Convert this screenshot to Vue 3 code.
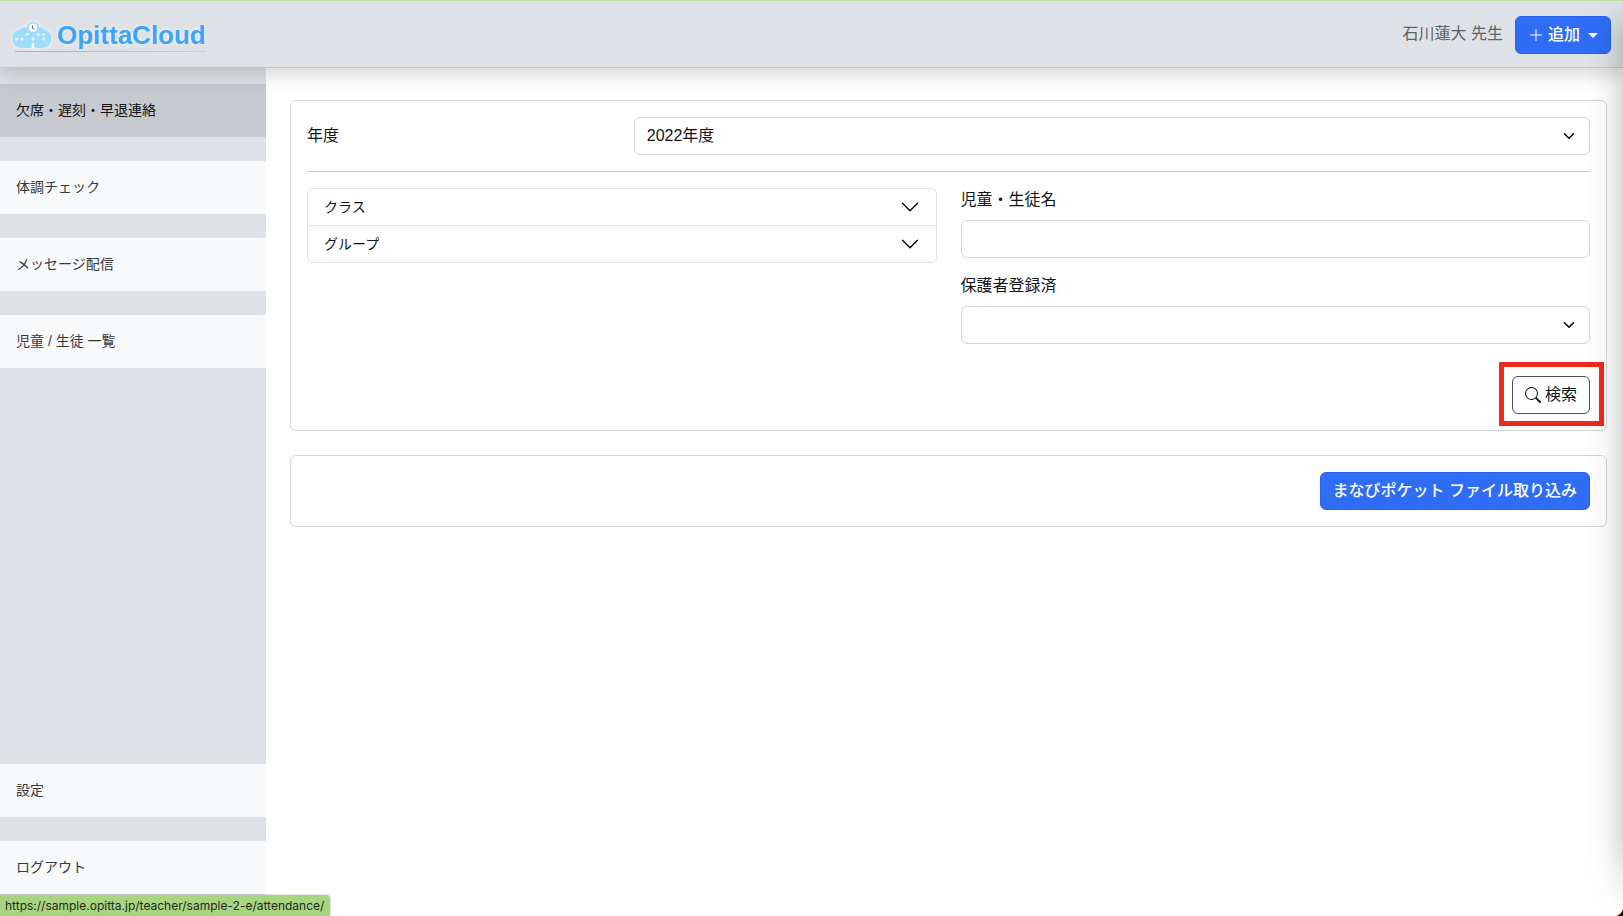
<script setup>
import { ref } from 'vue'

const year = ref('2022')
const studentName = ref('')
const registered = ref('')

const mainLinks = [
  { label: '欠席・遅刻・早退連絡', href: '#attendance', active: true },
  { label: '体調チェック', href: '#health' },
  { label: 'メッセージ配信', href: '#messages' },
  { label: '児童 / 生徒 一覧', href: '#students' },
]
const footLinks = [
  { label: '設定', href: '#settings' },
  { label: 'ログアウト', href: '#logout' },
]
const filters = ['クラス', 'グループ']
</script>

<template>
  <div class="page">
    <header class="topbar">
      <a class="brand" href="#home">
        <svg class="cloud" viewBox="0 0 40 28" width="40" height="28" aria-hidden="true">
          <g fill="#9edcfd">
            <circle cx="9.500" cy="17.500" r="9.500" />
            <circle cx="14" cy="12" r="6" />
            <circle cx="21" cy="7.500" r="6.500" />
            <circle cx="27" cy="12" r="6" />
            <circle cx="30" cy="17.500" r="9.500" />
            <rect x="9" y="10" width="21" height="17" />
          </g>
          <circle cx="21" cy="6.800" r="4.200" fill="#fff" />
          <path d="M20.500 4.500v2.800l2 .7" fill="none" stroke="#666" stroke-width="1" />
          <g fill="#fff">
            <rect x="14.200" y="12.200" width="2.400" height="2.400" />
            <rect x="25" y="12.200" width="2.400" height="2.400" />
            <rect x="30.500" y="12.200" width="2.400" height="2.400" />
            <rect x="3.200" y="17" width="2.400" height="2.400" />
            <rect x="8.700" y="17" width="2.400" height="2.400" />
            <rect x="19.800" y="17" width="2.400" height="2.400" />
            <rect x="30.500" y="17" width="2.400" height="2.400" />
            <rect x="19.700" y="22" width="2.600" height="5" />
          </g>
        </svg>
        <span class="brand-name">OpittaCloud</span>
      </a>
      <div class="account">
        <span class="teacher">石川蓮大 先生</span>
        <button class="btn primary" type="button">
          <svg viewBox="0 0 16 16" width="16" height="16" fill="currentColor" aria-hidden="true">
            <path d="M8 2a.5.5 0 0 1 .5.5v5h5a.5.5 0 0 1 0 1h-5v5a.5.5 0 0 1-1 0v-5h-5a.5.5 0 0 1 0-1h5v-5A.5.5 0 0 1 8 2z" />
          </svg>
          追加
          <span class="caret"></span>
        </button>
      </div>
    </header>

    <div class="body">
      <nav class="sidebar">
        <div class="links">
          <a v-for="l in mainLinks" :key="l.href" :href="l.href" :class="{ active: l.active }">{{ l.label }}</a>
        </div>
        <div class="links">
          <a v-for="l in footLinks" :key="l.href" :href="l.href">{{ l.label }}</a>
        </div>
      </nav>

      <main class="content">
        <form class="card" @submit.prevent>
          <div class="year-row">
            <label for="year">年度</label>
            <div class="select-box">
              <select id="year" v-model="year">
                <option value="2022">2022年度</option>
              </select>
              <svg class="chevron" viewBox="0 0 16 16" width="12" height="12" aria-hidden="true">
                <path d="m2 5 6 6 6-6" fill="none" stroke="#000" stroke-width="2" stroke-linecap="round" stroke-linejoin="round" />
              </svg>
            </div>
          </div>
          <hr />
          <div class="search-grid">
            <div class="accordion">
              <button v-for="f in filters" :key="f" type="button">
                {{ f }}
                <svg viewBox="0 0 16 16" width="20" height="20" fill="#000" aria-hidden="true">
                  <path d="M1.646 4.646a.5.5 0 0 1 .708 0L8 10.293l5.646-5.647a.5.5 0 0 1 .708.708l-6 6a.5.5 0 0 1-.708 0l-6-6a.5.5 0 0 1 0-.708z" />
                </svg>
              </button>
            </div>
            <div class="fields">
              <div class="field">
                <label for="student">児童・生徒名</label>
                <input id="student" v-model="studentName" type="text" />
              </div>
              <div class="field">
                <label for="registered">保護者登録済</label>
                <div class="select-box">
                  <select id="registered" v-model="registered">
                    <option value=""></option>
                  </select>
                  <svg class="chevron" viewBox="0 0 16 16" width="12" height="12" aria-hidden="true">
                    <path d="m2 5 6 6 6-6" fill="none" stroke="#000" stroke-width="2" stroke-linecap="round" stroke-linejoin="round" />
                  </svg>
                </div>
              </div>
            </div>
          </div>
          <div class="submit-row">
            <div class="highlight">
              <button class="btn outline" type="submit">
                <svg viewBox="0 0 16 16" width="16" height="16" fill="currentColor" aria-hidden="true">
                  <path d="M11.742 10.344a6.500 6.500 0 1 0-1.397 1.398h-.001c.03.04.062.078.098.115l3.850 3.850a1 1 0 0 0 1.415-1.414l-3.850-3.850a1.007 1.007 0 0 0-.115-.1zM12 6.500a5.500 5.500 0 1 1-11 0 5.500 5.500 0 0 1 11 0z" />
                </svg>
                検索
              </button>
            </div>
          </div>
        </form>

        <section class="card import">
          <button class="btn primary" type="button">まなびポケット ファイル取り込み</button>
        </section>
      </main>
    </div>

    <div class="edge-shade"></div>
    <div class="corner"></div>
    <div class="status">https://sample.opitta.jp/teacher/sample-2-e/attendance/</div>
  </div>
</template>

<style>
body {
  margin: 0;
  background: #fff;
}
</style>

<style scoped>
* {
  box-sizing: border-box;
}
.page {
  position: relative;
  display: flex;
  flex-direction: column;
  min-height: 100vh;
  overflow: hidden;
  font: 16px/24px "Liberation Sans", "Noto Sans CJK JP", sans-serif;
  color: #111417;
}
.topbar {
  position: relative;
  z-index: 1;
  display: flex;
  align-items: center;
  justify-content: space-between;
  height: 68px;
  padding: 2px 12px 0;
  background: #dee2e6;
  border-top: 1px solid #b9dd9c;
  border-bottom: 1px solid #c3c6c9;
  box-shadow: 0 8px 16px rgba(0, 0, 0, 0.15);
}
.brand {
  position: relative;
  display: flex;
  align-items: center;
  gap: 5px;
  text-decoration: none;
}
.brand::after {
  content: "";
  position: absolute;
  left: 3px;
  right: 0;
  bottom: -2px;
  height: 1px;
  background: linear-gradient(90deg, #f5a623, rgba(245, 166, 35, 0.4));
}
.brand-name {
  font-size: 26px;
  line-height: 30px;
  font-weight: 700;
  color: #3fa2fb;
  text-shadow: 0 0 3px #fff;
}
.cloud {
  filter: drop-shadow(0 0 2px rgba(255, 255, 255, 0.8));
}
.account {
  display: flex;
  align-items: center;
  gap: 12px;
}
.teacher {
  padding-bottom: 2px;
  color: #5f6265;
}
.btn {
  display: inline-flex;
  align-items: center;
  gap: 4px;
  height: 38px;
  padding: 0 12px;
  border: 1px solid;
  border-radius: 6px;
  font: inherit;
  white-space: nowrap;
}
.primary {
  color: #fff;
  font-weight: 500;
  background: #2f6df6;
  border-color: #2463f0;
}
.caret {
  margin-left: 4px;
  border: 5px solid transparent;
  border-top-color: currentColor;
  border-bottom: 0;
}
.body {
  display: flex;
  flex: 1;
}
.sidebar {
  display: flex;
  flex-direction: column;
  justify-content: space-between;
  flex: 0 0 266px;
  padding: 16px 0 22px;
  background: #dee2e6;
}
.links {
  display: flex;
  flex-direction: column;
  gap: 24px;
}
.links a {
  padding: 16px;
  font-size: 14px;
  line-height: 21px;
  color: #36393c;
  text-decoration: none;
  background: #f8f9fa;
}
.links a.active {
  color: #111417;
  background: #c6c9cd;
}
.content {
  flex: 1;
  min-width: 0;
  padding: 32px 16px 24px 24px;
}
.card {
  padding: 16px;
  border: 1px solid #d4d5d6;
  border-radius: 6px;
}
.year-row {
  display: grid;
  grid-template-columns: repeat(4, 1fr);
  column-gap: 24px;
  align-items: center;
}
.year-row .select-box {
  grid-column: span 3;
}
.select-box {
  position: relative;
}
input,
select {
  display: block;
  width: 100%;
  height: 38px;
  padding: 0 12px;
  font: inherit;
  color: inherit;
  background: #fff;
  border: 1px solid #ced4da;
  border-radius: 6px;
  appearance: none;
}
.chevron {
  position: absolute;
  top: 13px;
  right: 15px;
  pointer-events: none;
}
hr {
  height: 1px;
  margin: 16px 0;
  border: 0;
  background: #c8c9ca;
}
.search-grid {
  display: grid;
  grid-template-columns: 1fr 1fr;
  gap: 24px;
  align-items: start;
}
.accordion {
  border: 1px solid #dee2e6;
  border-radius: 6px;
}
.accordion button {
  display: flex;
  align-items: center;
  justify-content: space-between;
  width: 100%;
  height: 36px;
  padding: 0 16px;
  font: inherit;
  font-size: 14px;
  color: inherit;
  background: none;
  border: 0;
}
.accordion button + button {
  height: 37px;
  border-top: 1px solid #dee2e6;
}
.fields {
  display: grid;
  gap: 16px;
}
.field label {
  display: block;
  margin-bottom: 8px;
}
.submit-row {
  display: flex;
  justify-content: flex-end;
  margin-top: 32px;
}
.highlight {
  position: relative;
}
.highlight::after {
  content: "";
  position: absolute;
  inset: -14px -14px -12px -13px;
  border: 5px solid #ee2a1a;
  pointer-events: none;
}
.outline {
  color: #111417;
  background: #fff;
  border-color: #4c5054;
}
.import {
  display: flex;
  justify-content: flex-end;
  margin-top: 24px;
}
.edge-shade {
  position: absolute;
  z-index: 2;
  top: 0;
  right: 0;
  bottom: 0;
  width: 36px;
  background: linear-gradient(90deg, transparent, rgba(0, 0, 0, 0.03) 50%, rgba(0, 0, 0, 0.14));
  mask-image: linear-gradient(transparent, #000 40px, #000 calc(100% - 80px), transparent);
  pointer-events: none;
}
.corner {
  position: absolute;
  z-index: 3;
  right: 0;
  bottom: 0;
  width: 10px;
  height: 10px;
  background: radial-gradient(circle at 0 0, transparent 10px, #1a0505 11px);
  pointer-events: none;
}
.status {
  position: absolute;
  z-index: 3;
  left: 0;
  bottom: 0;
  padding: 0 6px 0 5px;
  font: 12px/21px Inter, sans-serif;
  color: #1f2a18;
  background: #a9d583;
  border-radius: 0 4px 0 0;
  box-shadow: 0 0 2px rgba(0, 0, 0, 0.4);
}
</style>
